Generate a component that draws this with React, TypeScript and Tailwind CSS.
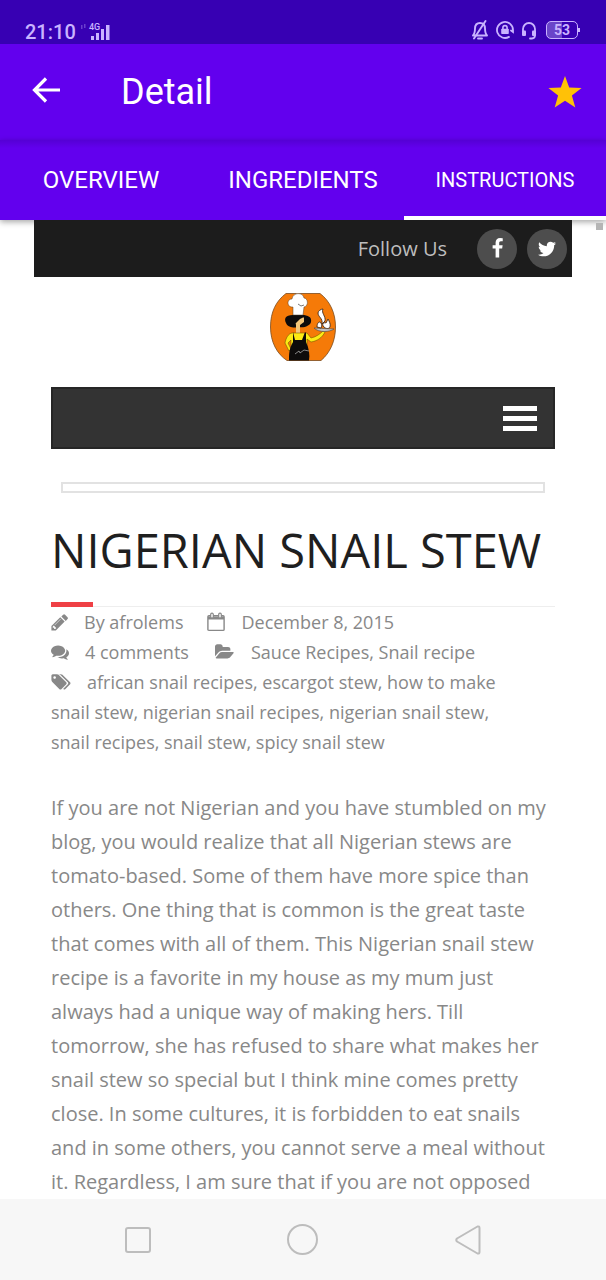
import React from "react";
import { FaTwitter } from "react-icons/fa";

function SignalIcon() {
  return (
    <svg width="30" height="20" viewBox="0 0 30 20" fill="currentColor" role="img" aria-label="4G signal">
      <g opacity="0.35">
        <rect x="1" y="3" width="1.500" height="4" />
        <rect x="4" y="2" width="1.500" height="4" />
      </g>
      <text x="9" y="8" fontSize="9" fontWeight="500" fontFamily="Roboto, sans-serif">4G</text>
      <rect x="11" y="14" width="3" height="4" />
      <rect x="16" y="11" width="3" height="7" />
      <rect x="21" y="7" width="3" height="11" />
      <rect x="26" y="3" width="3.500" height="15" />
    </svg>
  );
}

function MutedBellIcon() {
  return (
    <svg width="18" height="20" viewBox="0 0 18 20" fill="none" stroke="currentColor" strokeWidth="1.900" strokeLinecap="round" strokeLinejoin="round" aria-hidden="true">
      <path d="M2 15.500h14c-1.500-1.500-1.900-3-2-7C13.900 5 12 3 9 3S4.100 5 4 8.500c-.1 4-.5 5.500-2 7Z" />
      <path d="M7 18.500h4M14.500 1 3 18.500" />
    </svg>
  );
}

function RotationLockIcon() {
  return (
    <svg width="18" height="18" viewBox="0 0 18 18" fill="none" stroke="currentColor" strokeWidth="1.800" strokeLinecap="round" aria-hidden="true">
      <path d="M13 15.900A8 8 0 1 1 17 9v2l-2-1.500" />
      <rect x="5.200" y="7.800" width="7.600" height="5.200" rx="0.800" fill="currentColor" stroke="none" />
      <path d="M6.900 8V6.700a2.100 2.100 0 0 1 4.200 0V8" strokeWidth="1.600" />
    </svg>
  );
}

function HeadsetIcon() {
  return (
    <svg width="16" height="19" viewBox="0 0 16 19" fill="none" stroke="currentColor" strokeWidth="1.800" strokeLinecap="round" aria-hidden="true">
      <path d="M2 12V8a6 6 0 0 1 12 0v6c0 2-1 3.500-3 3.500H9" />
      <rect x="1" y="9.500" width="4" height="5.500" rx="1" fill="currentColor" stroke="none" />
      <rect x="11" y="9.500" width="4" height="5.500" rx="1" fill="currentColor" stroke="none" />
    </svg>
  );
}

function BackArrowIcon() {
  return (
    <svg width="28" height="26" viewBox="0 0 28 26" fill="none" stroke="currentColor" strokeWidth="3.200" aria-hidden="true">
      <path d="M28 13H3M14 1.500 2.500 13 14 24.500" />
    </svg>
  );
}

function StarIcon() {
  return (
    <svg width="34" height="32" viewBox="0 0 34 32" fill="#ffc107" aria-hidden="true">
      <path d="M17 0l4.200 11.500 12.400.5-9.700 7.600L27.300 31.500 17 24.700 6.700 31.500l3.400-11.900L.4 12l12.400-.5Z" />
    </svg>
  );
}

function FacebookIcon() {
  return (
    <svg width="21" height="21" viewBox="0 0 1792 1792" fill="currentColor" aria-hidden="true">
      <path d="M1343 12v264h-157q-86 0-116 36t-30 108v189h293l-39 296h-254v759h-306v-759h-255v-296h255v-218q0-186 104-288.500t277-102.500q147 0 228 12z" />
    </svg>
  );
}

function PencilIcon() {
  return (
    <svg className="mr-4" width="17" height="17" viewBox="90 120 1600 1600" fill="currentColor" aria-hidden="true">
      <path d="M491 1536l91-91-235-235-91 91v107h128v128h107zM1014 608q0-22-22-22-10 0-17 7l-542 542q-7 7-7 17 0 22 22 22 10 0 17-7l542-542q7-7 7-17zM960 416l416 416-832 832h-416v-416zM1683 512q0 53-37 90l-166 166-416-416 166-165q36-38 90-38 53 0 91 38l235 234q37 39 37 91z" />
    </svg>
  );
}

function CommentsIcon() {
  return (
    <svg className="mr-4" width="18" height="18" viewBox="0 0 1792 1792" fill="currentColor" aria-hidden="true">
      <path d="M1408 768q0 139-94 257t-256.500 186.500-353.500 68.500q-86 0-176-16-124 88-278 128-36 9-86 16h-3q-11 0-20.500-8t-11.500-21q-1-3-1-6.500t.5-6.500 2-6l2.500-5 3.500-5.500 4-5 4.500-5 4-4.500q5-6 23-25t26-29.500 22.500-29 25-38.500 20.500-44q-124-72-195-177t-71-224q0-139 94-257t256.500-186.500 353.500-68.500 353.500 68.500 256.500 186.500 94 257zM1792 1024q0 120-71 224.500t-195 176.500q10 24 20.500 44t25 38.500 22.500 29 26 29.500 23 25q1 1 4 4.500t4.500 5 4 5 3.500 5.500l2.500 5 2 6 .5 6.500-1 6.500q-3 14-13 22t-22 7q-50-7-86-16-154-40-278-128-90 16-176 16-271 0-472-132 58 4 88 4 161 0 309-45t264-129q125-92 192-212t67-254q0-77-23-152 129 71 204 178t75 230z" />
    </svg>
  );
}

function FolderOpenIcon() {
  return (
    <svg className="mr-[17px] ml-[26px]" width="19" height="18" viewBox="0 0 1900 1792" fill="currentColor" aria-hidden="true">
      <path d="M1879 952q0 31-31 66l-336 396q-43 51-120.500 86.500t-143.500 35.500h-1088q-34 0-60.500-13t-26.500-43q0-31 31-66l336-396q43-51 120.500-86.500t143.500-35.500h1088q34 0 60.500 13t26.500 43zM1536 608v160h-832q-94 0-197 47.500t-164 119.500l-337 396-5 6q0-4-.5-12.500t-.5-12.500v-960q0-92 66-158t158-66h320q92 0 158 66t66 158v32h544q92 0 158 66t66 158z" />
    </svg>
  );
}

function TagsIcon() {
  return (
    <svg className="mr-4 inline align-[-2px]" width="20" height="18" viewBox="0 0 1910 1792" fill="currentColor" aria-hidden="true">
      <path d="M448 448q0-53-37.500-90.500t-90.500-37.500-90.500 37.500-37.500 90.500 37.500 90.500 90.500 37.500 90.500-37.500 37.500-90.500zM1515 1024q0 53-37 90l-491 492q-39 37-91 37-53 0-90-37l-715-716q-38-37-64.500-101t-26.500-117v-416q0-52 38-90t90-38h416q53 0 117 26.500t102 64.500l715 714q37 39 37 91zM1899 1024q0 53-37 90l-491 492q-39 37-91 37-36 0-59-14t-53-45l470-470q37-37 37-90 0-52-37-91l-715-714q-38-38-102-64.500t-117-26.500h224q53 0 117 26.500t102 64.500l715 714q37 39 37 91z" />
    </svg>
  );
}

function CalendarIcon() {
  return (
    <svg width="18" height="20" viewBox="0 0 18 20" fill="none" stroke="currentColor" aria-hidden="true">
      <rect x="0.900" y="3.800" width="16.200" height="14.600" rx="1" strokeWidth="1.400" />
      <path d="M1 6h16" strokeWidth="3" />
      <rect x="3.700" y="1.200" width="2.600" height="4.800" rx="1.200" fill="#fff" strokeWidth="1.200" />
      <rect x="11.700" y="1.200" width="2.600" height="4.800" rx="1.200" fill="#fff" strokeWidth="1.200" />
    </svg>
  );
}

function ChefLogo() {
  return (
    <svg width="66" height="68" viewBox="0 0 66 68" role="img" aria-label="Afrolems">
      <path d="M16 .5h34C60 8 65.500 20 65.500 34S60 60 51 67.500H17C7 61 .5 49 .5 34S6 8 16 .5Z" fill="#f57a08" stroke="#7a4a1c" strokeWidth="0.800" />
      <path d="M23 22c-8 0-9 4-7 8 2 5 9 5 13 4 5 1 11-1 12-5 1-5-3-7-9-7Z" fill="#0d0b0b" />
      <path d="M25 26c2-3 8-4 9-1v4l-4 3v8h-4v-8Z" fill="#f3c77a" />
      <path d="M24 24c3-3 8-3 10 0l-4 2-4 4-2 0Z" fill="#0d0b0b" />
      <path d="M23 22v-8c-6 1-7-8-1-8 1-7 11-7 12-1 4 0 5 8 0 9l-1 8Z" fill="#fff" stroke="#53412f" strokeWidth="0.500" />
      <path d="M28 11l3 2 3-1" fill="none" stroke="#555" strokeWidth="0.800" />
      <path d="M22 40h15l4 5c5-1 9-4 12-7l2 1c-3 6-8 9-14 10l-4-3v10H21v-9l-3 3 3 6-2 2-4-8c1-5 3-9 7-10Z" fill="#fdea14" stroke="#5c4a00" strokeWidth="0.500" />
      <path d="M23 39l2 8h7l3-8 1 1v9c3 6 4 13 3 18.500H19c0-6 0-12 4-18.500v-9Z" fill="#0d0b0b" />
      <path d="M25 61l4-3 1 2 4-3 5 1" fill="none" stroke="#bbb" strokeWidth="0.700" />
      <path d="M44 35l20 1c-4 3-15 4-20-1Z" fill="#c3c3c3" stroke="#444" strokeWidth="0.600" />
      <path d="M47 34c0-5 3-6 4-4s1 4 0 5ZM52 31c1-6-4-7-4-11 0-2 3-4 5-4-2 4 3 7 2 12ZM54 34c-3-3 0-5 2-4l2-4c1 2 3 5 2 8-1 2-4 2-6 0Z" fill="#fff" stroke="#3f2b1e" strokeWidth="0.900" />
    </svg>
  );
}

const tabs = [
  { label: "OVERVIEW", selected: false },
  { label: "INGREDIENTS", selected: false },
  { label: "INSTRUCTIONS", selected: true },
];

export default function App() {
  return (
    <div className="flex min-h-screen flex-col bg-white font-['Open_Sans','Noto_Sans',sans-serif] text-[#888888]">
      <div className="flex h-11 items-end justify-between bg-[#3700b3] pr-[26px] pl-[25px] font-[Roboto,sans-serif] text-[#c9b3ff]">
        <div className="flex items-center gap-1">
          <span className="text-xl leading-6 font-medium">21:10</span>
          <SignalIcon />
        </div>
        <div className="flex h-7 items-center gap-[7px]">
          <MutedBellIcon />
          <RotationLockIcon />
          <HeadsetIcon />
          <div className="flex items-center pl-0.5">
            <span className="h-[18px] w-8 rounded-[5px] border border-current bg-linear-to-r from-[#6a45c9] from-50% to-transparent to-50% text-center text-sm leading-4 font-bold">53</span>
            <span className="h-1 w-0.5 bg-current" />
          </div>
        </div>
      </div>

      <header className="flex h-24 items-center bg-[#6200ee] pr-6 pl-8 font-[Roboto,sans-serif] text-white">
        <button type="button" aria-label="Back" className="-mt-1">
          <BackArrowIcon />
        </button>
        <h1 className="flex-1 pl-[61px] text-4xl leading-10">Detail</h1>
        <button type="button" aria-label="Favorite" aria-pressed="true">
          <StarIcon />
        </button>
      </header>

      <div role="tablist" className="relative grid h-20 grid-cols-3 bg-linear-to-b from-[#5500d4] to-[#6200ee] to-10% font-[Roboto,sans-serif] text-white shadow-[0_2px_6px_rgba(0,0,0,0.35)]">
        {tabs.map((tab) => (
          <button
            key={tab.label}
            type="button"
            role="tab"
            aria-selected={tab.selected}
            className={
              tab.selected
                ? "border-t-4 border-b-4 border-t-transparent border-b-white text-xl"
                : "border-t-4 border-b-4 border-transparent text-2xl"
            }
          >
            {tab.label}
          </button>
        ))}
      </div>

      <main className="flex flex-1 flex-col">
        <div className="relative z-10 mx-[34px] flex h-[57px] items-center justify-end gap-2.5 bg-[#1c1c1c] pr-[5px]">
          <span className="pr-5 text-xl text-[#bebebe]">Follow Us</span>
          <a href="#facebook" aria-label="Facebook" className="flex size-10 items-center justify-center rounded-full bg-[#4d4d4d] text-white">
            <FacebookIcon />
          </a>
          <a href="#twitter" aria-label="Twitter" className="flex size-10 items-center justify-center rounded-full bg-[#4d4d4d] text-lg text-white">
            <FaTwitter />
          </a>
          <span className="absolute top-[3px] -right-[31px] size-[7px] bg-[#b5b5b5]" />
        </div>

        <a href="#home" className="mt-4 self-center">
          <ChefLogo />
        </a>

        <div className="mx-[51px] mt-[26px] flex h-[62px] items-center justify-end border-2 border-[#262626] bg-[#333333] pr-4">
          <button type="button" aria-label="Menu" className="flex w-[34px] flex-col gap-[5px]">
            <span className="h-[5px] bg-white" />
            <span className="h-[5px] bg-white" />
            <span className="h-[5px] bg-white" />
          </button>
        </div>

        <div className="mx-[61px] mt-[33px] h-[11px] border-2 border-[#e2e2e2]" />

        <article className="mx-[51px]">
          <h2 className="mt-[29px] text-[47px] leading-[56px] whitespace-nowrap text-[#1f1f1f]">NIGERIAN SNAIL STEW</h2>
          <div className="mt-6 flex h-[5px] items-end border-b border-[#eeeeee]">
            <span className="-mb-px h-[5px] w-[42px] bg-[#ef4045]" />
          </div>

          <div className="text-lg leading-[30px]">
            <div className="flex items-center">
              <PencilIcon />
              <span>By afrolems</span>
              <span className="mr-4 ml-6">
                <CalendarIcon />
              </span>
              <span>December 8, 2015</span>
            </div>
            <div className="flex items-center">
              <CommentsIcon />
              <span>4 comments</span>
              <FolderOpenIcon />
              <span>Sauce Recipes, Snail recipe</span>
            </div>
            <p className="pr-7">
              <TagsIcon />
              african snail recipes, escargot stew, how to make snail stew, nigerian snail recipes, nigerian snail stew, snail recipes, snail stew, spicy snail stew
            </p>
          </div>

          <p className="mt-[34px] text-xl leading-[34px]">
            If you are not Nigerian and you have stumbled on my blog, you would realize that all Nigerian stews are tomato-based. Some of them have more spice than others. One thing that is common is the great taste that comes with all of them. This Nigerian snail stew recipe is a favorite in my house as my mum just always had a unique way of making hers. Till tomorrow, she has refused to share what makes her snail stew so special but I think mine comes pretty close. In some cultures, it is forbidden to eat snails and in some others, you cannot serve a meal without it. Regardless, I am sure that if you are not opposed
          </p>
        </article>
      </main>

      <nav className="sticky bottom-0 z-20 grid h-[81px] shrink-0 grid-cols-3 bg-[#f7f7f7] px-[55px] text-[#bdbdbd]">
        <button type="button" aria-label="Recent apps" className="flex items-center justify-center">
          <span className="size-[26px] rounded-[3px] border-2 border-current" />
        </button>
        <button type="button" aria-label="Home" className="flex items-center justify-center">
          <span className="size-[31px] rounded-full border-2 border-current" />
        </button>
        <button type="button" aria-label="Back" className="flex items-center justify-center">
          <svg width="26" height="30" viewBox="0 0 26 30" fill="none" stroke="currentColor" strokeWidth="2" strokeLinejoin="round" aria-hidden="true">
            <path d="M22.500 1.500 2 13.500q-1.500 1.500 0 3L22.500 28.500q2 .5 2-1.500V3q0-2-2-1.500Z" />
          </svg>
        </button>
      </nav>
    </div>
  );
}
